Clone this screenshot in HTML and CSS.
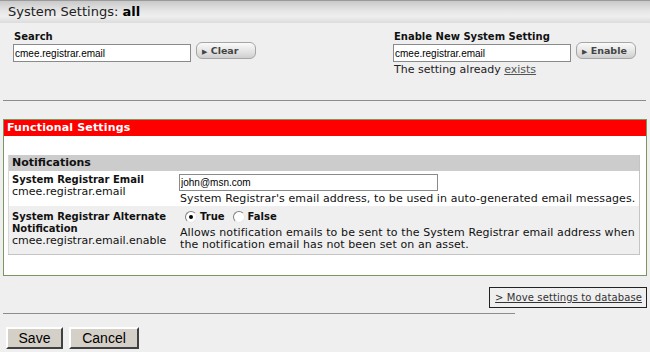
FILE: index.html
```html
<!DOCTYPE html>
<html>
<head>
<meta charset="utf-8">
<link rel="stylesheet" href="styles.css">
</head>
<body>
<div class="header">System Settings: <b>all</b></div>
<div class="toolbar">
  <div class="tool">
    <div class="tool-label">Search</div>
    <div class="tool-row">
      <input class="text" type="text" value="cmee.registrar.email">
      <button class="pill"><span class="tri">&#9654;</span> Clear</button>
    </div>
  </div>
  <div class="tool">
    <div class="tool-label">Enable New System Setting</div>
    <div class="tool-row">
      <input class="text" type="text" value="cmee.registrar.email">
      <button class="pill"><span class="tri">&#9654;</span> Enable</button>
    </div>
    <div class="note">The setting already <a href="#">exists</a></div>
  </div>
</div>
<div class="sep"></div>
<div class="panel">
  <div class="panel-title">Functional Settings</div>
  <div class="panel-body">
    <table class="settings">
      <tr class="row-g"><th colspan="2" class="group">Notifications</th></tr>
      <tr class="row-a">
        <td class="name"><b>System Registrar Email</b><br>cmee.registrar.email</td>
        <td class="value">
          <input class="text wide" type="text" value="john@msn.com">
          <div class="desc">System Registrar's email address, to be used in auto-generated email messages.</div>
        </td>
      </tr>
      <tr class="row-b">
        <td class="name"><b>System Registrar Alternate Notification</b><br>cmee.registrar.email.enable</td>
        <td class="value">
          <div class="radios">
            <label><span class="radio on"></span><b>True</b></label>
            <label><span class="radio"></span><b>False</b></label>
          </div>
          <div class="desc">Allows notification emails to be sent to the System Registrar email address when the notification email has not been set on an asset.</div>
        </td>
      </tr>
    </table>
  </div>
</div>
<div class="move-row"><a class="move" href="#">&gt; Move settings to database</a></div>
<div class="sep short"></div>
<div class="actions">
  <button class="btn save">Save</button>
  <button class="btn cancel">Cancel</button>
</div>
</body>
</html>
```
FILE: styles.css
```css
html, body {
  margin: 0;
  padding: 0;
}
body {
  background: #efefef;
  font-family: "DejaVu Sans", Verdana, sans-serif;
  font-size: 11px;
  color: #111;
  width: 650px;
  height: 352px;
  overflow: hidden;
}
.header {
  height: 22px;
  border-top: 1px solid #9a9a9a;
  background: linear-gradient(#c9c9c9 0%, #e6e6e6 45%, #eeeeee 70%, #dcdcdc 100%);
  font-size: 13px;
  line-height: 22px;
  padding-left: 8px;
  color: #222;
}
.header b { color: #000; }
.toolbar {
  height: 77px;
  display: flex;
  justify-content: space-between;
  padding: 7px 14px 0 13px;
  box-sizing: border-box;
}
.tool-label {
  font-weight: bold;
  font-size: 10px;
  line-height: 13px;
  padding-left: 1px;
  margin-bottom: 1px;
}
.tool-row {
  display: flex;
  align-items: flex-start;
  gap: 5px;
}
.text {
  display: block;
  width: 178px;
  height: 18px;
  box-sizing: border-box;
  border: 1px solid #8a8a8a;
  background: #fff;
  font-family: "Liberation Sans", Arial, sans-serif;
  font-size: 10px;
  padding: 1px 1px;
  margin: 0;
  color: #000;
}
.pill {
  margin-top: -2px;
  width: 60px;
  height: 17px;
  border: 1px solid #a6a6a6;
  border-radius: 6px;
  background: linear-gradient(#fafafa, #e2e2e2 60%, #cfcfcf);
  font-family: "DejaVu Sans", Verdana, sans-serif;
  font-size: 9.5px;
  font-weight: bold;
  color: #444;
  text-align: left;
  padding: 0 0 0 5px;
}
.tri { font-size: 7px; }
.note {
  margin-top: 1px;
  padding-left: 1px;
  line-height: 13px;
  color: #222;
}
.note a { color: #555; }
.sep {
  height: 1px;
  background: #8c8c8c;
  margin: 0 4px 0 3px;
}
.panel {
  margin: 18px 3px 0 3px;
  border: 1px solid #7d9560;
  background: #fff;
}
.panel-title {
  background: #ff0000;
  color: #fff;
  font-weight: bold;
  font-size: 11px;
  height: 16px;
  line-height: 16px;
  padding-left: 3px;
  letter-spacing: 0.15px;
}
.panel-body {
  padding: 19px 6px 20px 4px;
}
.settings {
  width: 100%;
  border-collapse: collapse;
  border-left: 1px solid #d8d8d8;
  border-right: 1px solid #c4c4c4;
  border-bottom: 1px solid #c4c4c4;
}
.settings td, .settings th {
  padding: 0;
  vertical-align: top;
  text-align: left;
}
.row-g { height: 16px; }
.group {
  background: #cccccc;
  line-height: 16px;
  padding-left: 3px !important;
  font-size: 11px;
}
.row-a { height: 35px; }
.row-b { height: 48px; }
.row-a td { background: #fff; }
.row-b td { background: #efefef; }
.name {
  width: 167px;
  padding: 3px 0 0 3px !important;
  line-height: 12px;
}
.row-b .name { padding-top: 5px !important; }
.name b { font-size: 10px; }
.row-a .value { padding-top: 3px !important; }
.row-b .value { padding-top: 2px !important; }
.wide { width: 259px; height: 17px; font-size: 10px; }
.desc {
  line-height: 12px;
  margin-top: 2px;
  padding-left: 1px;
  letter-spacing: 0.1px;
}
.radios {
  display: flex;
  gap: 8px;
  padding-left: 6px;
  height: 17px;
  align-items: center;
}
.radios label { display: flex; align-items: center; gap: 3px; }
.radios b { font-size: 10px; }
.radio {
  width: 12px;
  height: 12px;
  border-radius: 50%;
  border: 1px solid #808080;
  border-right-color: #e8e8e8;
  border-bottom-color: #e8e8e8;
  box-sizing: border-box;
  background: #fff;
  position: relative;
}
.radio.on::after {
  content: "";
  position: absolute;
  left: 3px;
  top: 3px;
  width: 4px;
  height: 4px;
  border-radius: 50%;
  background: #000;
}
.move-row {
  display: flex;
  justify-content: flex-end;
  padding: 11px 3px 0 0;
  height: 37px;
  box-sizing: border-box;
}
.move {
  border: 1px solid #222;
  padding: 3px 4px 3px 5px;
  color: #333;
  font-size: 10px;
  height: 13px;
  line-height: 13px;
  letter-spacing: 0.1px;
}
.sep.short { width: 512px; margin: 0 0 0 3px; }
.actions {
  display: flex;
  gap: 6px;
  padding: 13px 0 0 6px;
}
.btn {
  height: 22px;
  background: #d4d0c8;
  border: 2px solid;
  border-color: #fff #404040 #404040 #fff;
  font-family: "Liberation Sans", Arial, sans-serif;
  font-size: 14px;
  color: #000;
  padding: 0;
  margin: 0;
}
.save { width: 57px; }
.cancel { width: 70px; }
```
